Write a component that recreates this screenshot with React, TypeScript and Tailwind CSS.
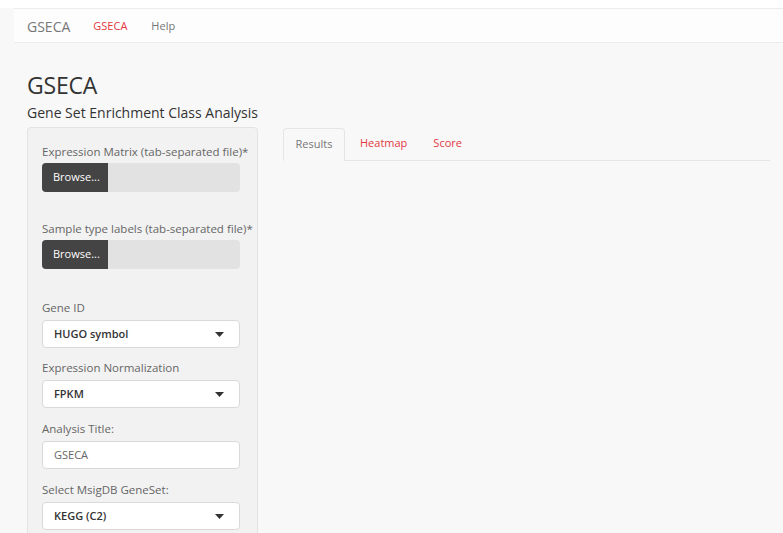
import React from 'react';

const font = { fontFamily: '"Open Sans", "Liberation Sans", sans-serif' };

const Caret = () => (
  <svg width="9" height="5" viewBox="0 0 9 5" className="shrink-0">
    <path d="M0 0 L9 0 L4.5 5 Z" fill="#333" />
  </svg>
);

const FileField = ({ label }: { label: string }) => (
  <div>
    <div className="text-[11.5px] leading-4 text-[#666] mb-[3px]">{label}</div>
    <div className="flex h-[29px] w-[198px] rounded-[4px] bg-[#e2e2e2] overflow-hidden">
      <div className="w-[66px] bg-[#444] text-white text-[11px] flex items-center pl-[11px]">Browse...</div>
    </div>
  </div>
);

const SelectField = ({ label, value }: { label: string; value: string }) => (
  <div>
    <div className="text-[11.5px] leading-4 text-[#666] mb-[4px]">{label}</div>
    <div className="flex items-center justify-between h-[28px] w-[198px] rounded-[4px] bg-white border border-[#d9d9d9] pl-[11px] pr-[15px]">
      <span className="text-[11px] font-semibold text-[#333]">{value}</span>
      <Caret />
    </div>
  </div>
);

export default function App() {
  return (
    <div className="w-[783px] h-[533px] overflow-hidden bg-white pt-[8px]" style={font}>
      <div className="bg-[#f8f8f8] h-[525px]">
        {/* navbar */}
        <div className="ml-[14px] h-[35px] bg-[#fdfdfd] border-t border-b border-[#ececec] flex items-center pl-[13px] pt-[2px]">
          <span className="text-[14px] text-[#777] mr-[23px]">GSECA</span>
          <span className="text-[11px] text-[#e2383f] mr-[24px]">GSECA</span>
          <span className="text-[11px] text-[#777]">Help</span>
        </div>

        <div className="flex pl-[27px] pt-[28px]">
          <div className="w-[231px] shrink-0">
            <h1 className="text-[23px] leading-[28px] text-[#333] tracking-[-0.2px]">GSECA</h1>
            <div className="text-[14px] leading-5 text-[#333] mt-[4px]">Gene Set Enrichment Class Analysis</div>

            {/* sidebar well */}
            <div className="mt-[4px] h-[420px] bg-[#f2f2f2] border border-[#e3e3e3] rounded-[4px] pl-[14px] pt-[16px]">
              <FileField label="Expression Matrix (tab-separated file)*" />
              <div className="h-[29px]" />
              <FileField label="Sample type labels (tab-separated file)*" />
              <div className="h-[31px]" />
              <SelectField label="Gene ID" value="HUGO symbol" />
              <div className="h-[12px]" />
              <SelectField label="Expression Normalization" value="FPKM" />
              <div className="h-[13px]" />
              <div>
                <div className="text-[11.5px] leading-4 text-[#666] mb-[4px]">Analysis Title:</div>
                <div className="flex items-center h-[28px] w-[198px] rounded-[4px] bg-white border border-[#d9d9d9] pl-[11px]">
                  <span className="text-[11px] text-[#666]">GSECA</span>
                </div>
              </div>
              <div className="h-[13px]" />
              <SelectField label="Select MsigDB GeneSet:" value="KEGG (C2)" />
            </div>
          </div>

          {/* tabs */}
          <div className="ml-[25px] mt-[57px] w-[487px]">
            <div className="flex items-end h-[33px] border-b border-[#e5e5e5]">
              <div className="h-[33px] w-[62px] -mb-px border border-[#e5e5e5] border-b-[#f8f8f8] rounded-t-[4px] bg-[#f8f8f8] flex items-center justify-center text-[11px] text-[#777]">
                Results
              </div>
              <div className="h-[33px] flex items-center pl-[15px] text-[11px] text-[#e2383f]">Heatmap</div>
              <div className="h-[33px] flex items-center pl-[26px] text-[11px] text-[#e2383f]">Score</div>
            </div>
          </div>
        </div>
      </div>
    </div>
  );
}
